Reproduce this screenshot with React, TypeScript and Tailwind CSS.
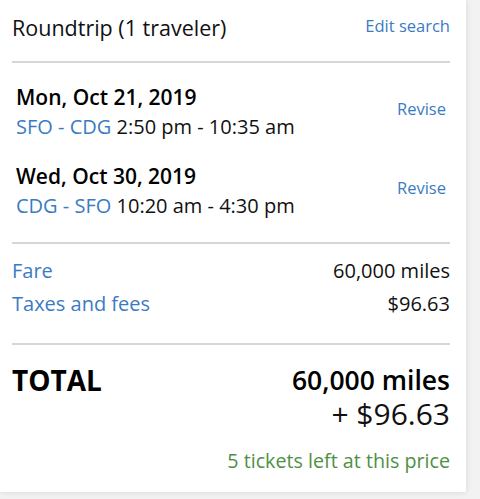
import React from "react";

type Flight = {
  date: string;
  route: string;
  times: string;
};

const flights: Flight[] = [
  { date: "Mon, Oct 21, 2019", route: "SFO - CDG", times: "2:50 pm - 10:35 am" },
  { date: "Wed, Oct 30, 2019", route: "CDG - SFO", times: "10:20 am - 4:30 pm" },
];

// one leg of the trip
const FlightRow: React.FC<{ flight: Flight }> = ({ flight }) => (
  <div className="flex items-center justify-between px-1">
    <div>
      <div className="text-[21px] font-semibold leading-[30px] text-black">{flight.date}</div>
      <div className="text-[20px] leading-[30px] text-[#111]">
        <span className="text-[#3b7bc4]">{flight.route}</span> {flight.times}
      </div>
    </div>
    <a className="text-[16.5px] leading-[24px] text-[#3b7bc4] mb-[6px]">Revise</a>
  </div>
);

const App: React.FC = () => {
  return (
    <div className="min-h-[499px] w-[480px] bg-[#f2f2f2]" style={{ fontFamily: '"Open Sans", sans-serif' }}>
      <div className="w-[466px] bg-white shadow-[0_0_6px_rgba(0,0,0,0.12)] pl-3 pr-4 pt-[13px] pb-[17px]">
        {/* Header */}
        <div className="flex items-start justify-between pb-[18px] border-b-2 border-[#d6d6d6]">
          <div className="text-[21.5px] leading-[30px] text-[#111]">Roundtrip (1 traveler)</div>
          <a className="text-[16.5px] leading-[24px] text-[#3b7bc4] mt-[1px]">Edit search</a>
        </div>

        {/* Flights */}
        <div className="flex flex-col gap-[19px] pt-[19px] pb-[21px] border-b-2 border-[#d6d6d6]">
          {flights.map((f) => (
            <FlightRow key={f.date} flight={f} />
          ))}
        </div>

        {/* Fare breakdown */}
        <div className="flex flex-col gap-[5px] pt-[13px] pb-[25px] border-b-2 border-[#d6d6d6] text-[20px] leading-[28px]">
          <div className="flex justify-between">
            <span className="text-[#3b7bc4]">Fare</span>
            <span className="text-[#111]">60,000 miles</span>
          </div>
          <div className="flex justify-between">
            <span className="text-[#3b7bc4]">Taxes and fees</span>
            <span className="text-[#111]">$96.63</span>
          </div>
        </div>

        {/* Total */}
        <div className="flex justify-between pt-[18px]">
          <div className="text-[28px] font-bold leading-[34px] text-black">TOTAL</div>
          <div className="flex flex-col items-end">
            <div className="text-[26.5px] font-semibold leading-[32px] mt-[1px] text-black">60,000 miles</div>
            <div className="text-[30px] leading-[36px] text-[#111]">+ $96.63</div>
            <div className="text-[19.7px] leading-[28px] mt-[15px] text-[#4f8f44]">5 tickets left at this price</div>
          </div>
        </div>
      </div>
    </div>
  );
};

export default App;
